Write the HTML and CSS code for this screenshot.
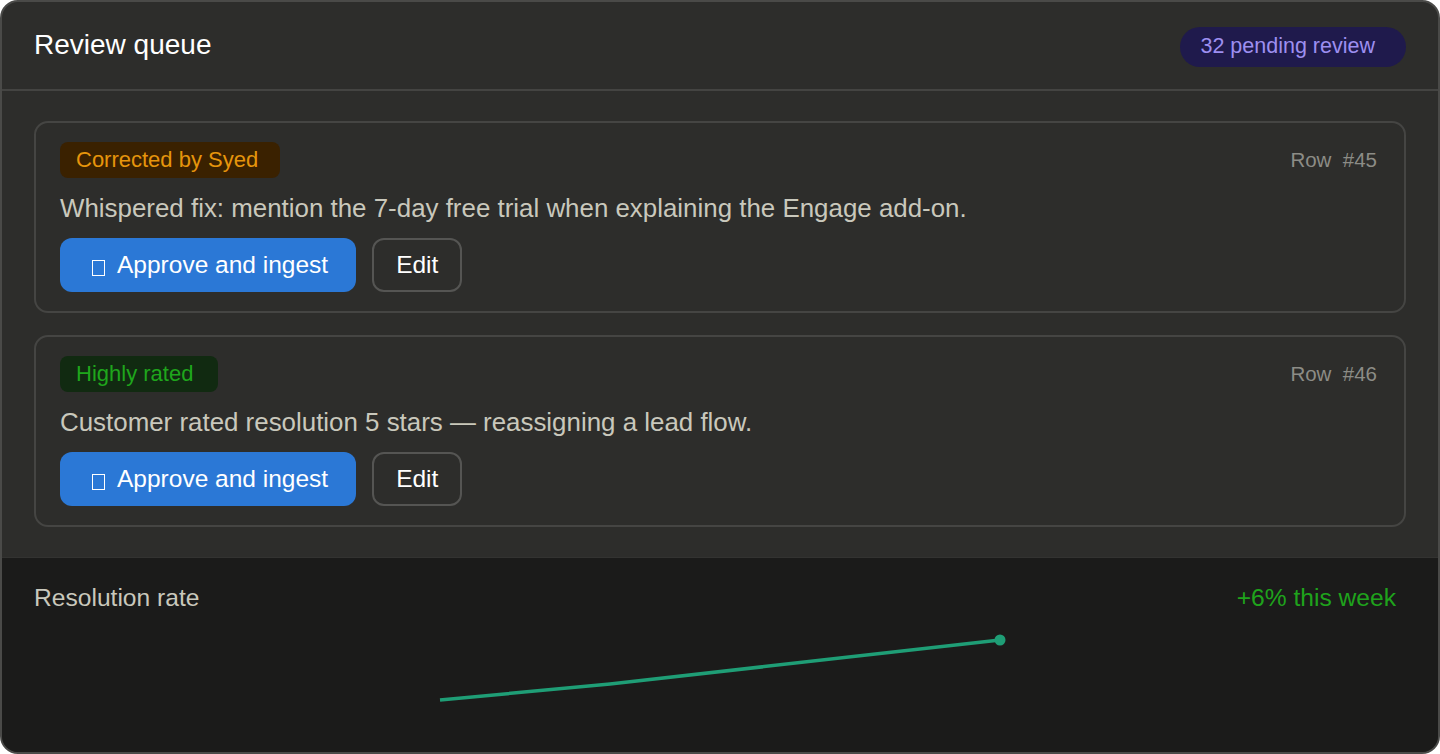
FILE: index.html
```html
<!DOCTYPE html>
<html lang="en">
<head>
<meta charset="utf-8">
<title>Review queue</title>
<link rel="stylesheet" href="styles.css">
</head>
<body>
<div class="panel">
  <header class="head">
    <h1 class="title">Review queue</h1>
    <span class="pill">32 pending review</span>
  </header>
  <section class="queue">
    <article class="card">
      <div class="card-top">
        <span class="tag tag-amber">Corrected by Syed</span>
        <span class="row-no">Row  #45</span>
      </div>
      <p class="desc">Whispered fix: mention the 7-day free trial when explaining the Engage add-on.</p>
      <div class="actions">
        <button class="btn btn-primary"><span class="ico"></span>Approve and ingest</button>
        <button class="btn btn-ghost">Edit</button>
      </div>
    </article>
    <article class="card">
      <div class="card-top">
        <span class="tag tag-green">Highly rated</span>
        <span class="row-no">Row  #46</span>
      </div>
      <p class="desc">Customer rated resolution 5 stars — reassigning a lead flow.</p>
      <div class="actions">
        <button class="btn btn-primary"><span class="ico"></span>Approve and ingest</button>
        <button class="btn btn-ghost">Edit</button>
      </div>
    </article>
  </section>
  <footer class="foot">
    <div class="foot-top">
      <span class="foot-label">Resolution rate</span>
      <span class="foot-delta">+6% this week</span>
    </div>
    <svg class="chart" width="580" height="100" viewBox="0 0 580 100">
      <polyline points="10,87 180,71 570,27" fill="none" stroke="#1f9e76" stroke-width="3.5" stroke-linejoin="round"/>
      <circle cx="570" cy="27" r="5.5" fill="#1f9e76"/>
    </svg>
  </footer>
</div>
</body>
</html>
```

FILE: styles.css
```css
* { box-sizing: border-box; }
html, body { margin: 0; padding: 0; background: #ffffff; }
body {
  font-family: "Liberation Sans", Arial, sans-serif;
  width: 1440px;
  height: 754px;
}
.panel {
  width: 1440px;
  height: 754px;
  border: 2px solid #4a4a48;
  border-radius: 18px;
  background: #2d2d2b;
  overflow: hidden;
  display: flex;
  flex-direction: column;
}
.head {
  height: 89px;
  flex: none;
  display: flex;
  align-items: center;
  justify-content: space-between;
  padding: 0 32px;
  border-bottom: 2px solid #444442;
}
.title {
  margin: 0;
  font-weight: 400;
  font-size: 28px;
  color: #ffffff;
  line-height: 1;
  margin-top: -2px;
}
.pill {
  height: 40px;
  padding: 0 31px 0 20px;
  border-radius: 20px;
  background: #1f1a4c;
  color: #9d8ff0;
  font-size: 21.5px;
  display: flex;
  align-items: center;
  margin-top: 2px;
}
.queue {
  padding: 30px 32px;
  display: flex;
  flex-direction: column;
  gap: 22px;
  flex: none;
}
.card {
  border: 2px solid #454543;
  border-radius: 14px;
  padding: 19px 24px;
  display: flex;
  flex-direction: column;
  gap: 15px;
}
.card-top {
  display: flex;
  justify-content: space-between;
  align-items: center;
  height: 36px;
}
.tag {
  height: 36px;
  padding: 0 22px 0 16px;
  border-radius: 8px;
  font-size: 22px;
  display: flex;
  align-items: center;
}
.tag-amber { background: #3a2100; color: #e6950c; }
.tag-green { background: #112a11; color: #1fa61c; padding-right: 25px; }
.row-no {
  white-space: pre;
  color: #8c8c86;
  font-size: 20.5px;
  margin-right: 3px;
}
.desc {
  margin: 0;
  font-size: 25.9px;
  line-height: 30px;
  color: #c9c8bc;
}
.actions {
  display: flex;
  gap: 16px;
}
.btn {
  height: 54px;
  border-radius: 12px;
  font-family: "Liberation Sans", Arial, sans-serif;
  font-size: 24.5px;
  color: #ffffff;
  display: flex;
  align-items: center;
  cursor: pointer;
}
.btn-primary {
  background: #2b78d6;
  border: none;
  padding: 0 28px 0 32px;
  gap: 12px;
}
.ico {
  width: 13px;
  height: 16px;
  border: 1px solid #ffffff;
  margin-top: 6px;
}
.btn-ghost {
  background: transparent;
  border: 2px solid #555553;
  padding: 0 22px;
}
.foot {
  flex: 1;
  background: #1b1b1a;
  border-top: 1px solid #333331;
  padding: 25px 42px 0 32px;
  display: flex;
  flex-direction: column;
}
.foot-top {
  display: flex;
  justify-content: space-between;
  line-height: 30px;
  font-size: 24.6px;
}
.foot-label { color: #c9c8bc; }
.foot-delta { color: #1fa31c; }
.chart {
  display: block;
  margin: 0 0 0 396px;
}
```
